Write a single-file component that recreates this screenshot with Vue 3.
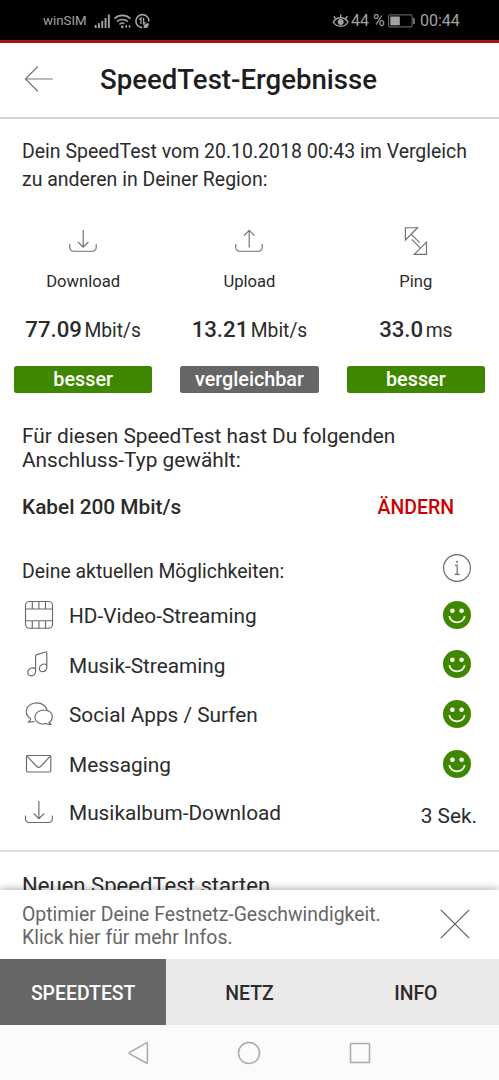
<script setup>
const metrics = [
  { id: 'down', label: 'Download', value: '77.09', unit: 'Mbit/s', rating: 'besser', good: true },
  { id: 'up', label: 'Upload', value: '13.21', unit: 'Mbit/s', rating: 'vergleichbar', good: false },
  { id: 'ping', label: 'Ping', value: '33.0', unit: 'ms', rating: 'besser', good: true },
]
const features = [
  { id: 'video', label: 'HD-Video-Streaming' },
  { id: 'music', label: 'Musik-Streaming' },
  { id: 'social', label: 'Social Apps / Surfen' },
  { id: 'mail', label: 'Messaging' },
  { id: 'album', label: 'Musikalbum-Download', value: '3 Sek.' },
]
const tabs = ['SPEEDTEST', 'NETZ', 'INFO']
</script>

<template>
  <div class="screen">
    <div class="status">
      <span class="carrier">winSIM</span>
      <svg class="sig" width="56" height="18" viewBox="0 0 56 18">
        <g fill="#a2a2a2">
          <rect x="0.7" y="13" width="1.9" height="3" />
          <rect x="4" y="11.2" width="1.9" height="4.8" />
          <rect x="7.3" y="8.8" width="1.9" height="7.2" />
          <rect x="10.6" y="6" width="1.9" height="10" />
          <rect x="13.9" y="2.5" width="1.9" height="13.5" />
        </g>
        <g fill="none" stroke="#a2a2a2" stroke-width="1.6">
          <path d="M20.4 6.6a11.5 11.5 0 0 1 16 0" />
          <path d="M23 9.6a7.8 7.8 0 0 1 10.8 0" />
          <path d="M25.4 12.3a4.6 4.6 0 0 1 5-.9" />
          <path d="M54.9 9.5A6.5 6.5 0 1 0 48.2 15.6" />
          <path d="M47 12V6l-1.8 1.6M49.6 5.8v6l1.8-1.6" stroke-width="1.3" />
        </g>
        <circle cx="28.2" cy="14.9" r="1.3" fill="#a2a2a2" />
        <path d="M31 14.5l2-2v4zM36.8 14.5l-2-2v4z" fill="#a2a2a2" />
        <path d="M49.6 16c-.4-3 1.3-5 5.3-4.6c0 3.6-2 5.2-5.3 4.6z" fill="#a2a2a2" />
      </svg>
      <svg class="eye" width="18" height="16" viewBox="0 0 18 16" fill="none" stroke="#a2a2a2" stroke-width="1.4">
        <path d="M1.3 9C4.5 3.3 13 3.3 16 9C13 14.7 4.5 14.7 1.3 9z" />
        <path d="M3.6 5.5L1.8 3.3M8.7 4.5V1.4M13.6 5.5l1.8-2.2" />
        <circle cx="8.7" cy="9" r="2.3" fill="#a2a2a2" />
      </svg>
      <span class="pct">44 %</span>
      <svg class="batt" width="28" height="14" viewBox="0 0 28 14">
        <rect x="0.6" y="0.9" width="23.5" height="12" rx="1" fill="none" stroke="#777" stroke-width="1" />
        <rect x="2.3" y="2.5" width="9.5" height="8.8" fill="#a2a2a2" />
        <rect x="25.3" y="4" width="1.3" height="6" fill="#a2a2a2" />
      </svg>
      <span class="clock">00:44</span>
    </div>

    <header class="head">
      <svg width="30" height="28" viewBox="0 0 30 28" fill="none" stroke="#777" stroke-width="1.2">
        <path d="M28.7 14H1.7M13.8 1.5L1.4 14l12.4 12.3" />
      </svg>
      <h1>SpeedTest-Ergebnisse</h1>
    </header>

    <main class="content">
      <p class="intro">Dein SpeedTest vom 20.10.2018 00:43 im Vergleich<br />zu anderen in Deiner Region:</p>

      <section class="metrics">
        <div v-for="m in metrics" :key="m.id" class="metric">
          <svg width="32" height="32" viewBox="0 0 32 32" fill="none" stroke="#707070" stroke-width="1.15">
            <template v-if="m.id !== 'ping'">
              <path d="M2.8 19v3.6a3.6 3.6 0 0 0 3.6 3.6h19.2a3.6 3.6 0 0 0 3.6-3.6V19" />
              <path v-if="m.id === 'down'" d="M16.2 5v17M11 17l5.2 5.2L21.4 17" />
              <path v-else d="M16.2 22.5V5.5M11 10.6l5.2-5.2 5.2 5.2" />
            </template>
            <path v-else d="M5.4 2.7H17.6L5.4 15zM26.5 17.2v12.2H14.2zM11.6 9.7l8 8M19.9 22.6l-8.2-8.2" />
          </svg>
          <div class="label">{{ m.label }}</div>
          <div class="value"><b>{{ m.value }}</b><span>{{ m.unit }}</span></div>
          <div class="badge" :class="{ good: m.good }">{{ m.rating }}</div>
        </div>
      </section>

      <p class="type">Für diesen SpeedTest hast Du folgenden<br />Anschluss-Typ gewählt:</p>
      <div class="plan"><strong>Kabel 200 Mbit/s</strong><span class="change">ÄNDERN</span></div>
      <div class="options">
        <span>Deine aktuellen Möglichkeiten:</span>
        <svg width="30" height="30" viewBox="0 0 30 30" fill="none" stroke="#686868" stroke-width="1.15">
          <circle cx="15" cy="15" r="13.4" />
          <path d="M13 12.3h2.2v9M12.8 21.4h4.7" />
          <circle cx="15" cy="8.7" r=".8" fill="#686868" stroke-width=".5" />
        </svg>
      </div>

      <ul class="features">
        <li v-for="f in features" :key="f.id" :class="f.id">
          <svg width="32" height="32" viewBox="0 0 32 32" fill="none" stroke="#6a6a6a" stroke-width="1.15">
            <template v-if="f.id === 'video'">
              <rect x="2.5" y="2.5" width="27" height="26.7" rx="4" />
              <path d="M2.5 10h27M2.5 21.7h27M9.3 2.5V10M15.9 2.5V10M22.5 2.5V10M9.3 21.7v7.5M15.9 21.7v7.5M22.5 21.7v7.5" />
            </template>
            <path v-else-if="f.id === 'music'" d="M12.6 24V8.2Q12.6 7 13.8 6.6L22.6 4Q23.8 3.7 23.8 5V20M12.6 20.8C9.8 18.6 5 20.6 4.8 24.2C4.7 26.4 6 27.8 8.1 27.8C11 27.8 12.6 26 12.6 23M23.8 17C21 14.8 16.6 16.6 16.3 20.2C16.2 22.6 17.7 23.7 19.5 23.7C22.3 23.7 23.8 22 23.8 19" />
            <template v-else-if="f.id === 'social'">
              <path d="M11.6 23.3Q9 24.3 5.6 24Q8.2 22.3 7.4 20.3C1.6 17.3 2.2 9.3 8 6.3C14.5 3 22.5 5.8 24.2 12.3" />
              <path d="M26 24.5C30.5 21.5 30.3 15.2 25.5 13C19.7 10.4 12 13.5 12 19C12 24.6 18.5 27.2 23.3 25.4Q25.5 26.8 28.4 26.2Q26.4 25.6 26 24.5z" />
            </template>
            <template v-else-if="f.id === 'mail'">
              <rect x="3.5" y="7.5" width="24.3" height="16.5" rx="1.2" />
              <path d="M4 8.2l9.8 10.3q1.9 1.8 3.800 0L27.3 8.2" />
            </template>
            <path v-else d="M2.5 19.500v3.4a3.6 3.6 0 0 0 3.6 3.6h19.6a3.6 3.6 0 0 0 3.6-3.6V19.500M15.9 5V22.7M10.6 17.4l5.3 5.3 5.3-5.3" />
          </svg>
          <span class="name">{{ f.label }}</span>
          <span v-if="f.value" class="secs">{{ f.value }}</span>
          <svg v-else width="28" height="28" viewBox="0 0 28 28">
            <circle cx="14" cy="14" r="14" fill="#408700" />
            <circle cx="9.4" cy="9.8" r="2.3" fill="#fff" />
            <circle cx="18.6" cy="9.8" r="2.3" fill="#fff" />
            <path d="M6.3 15.2c1.4 8.2 14 8.2 15.4 0" fill="none" stroke="#fff" stroke-width="1.8" />
          </svg>
        </li>
      </ul>
      <div class="restart">Neuen SpeedTest starten</div>
    </main>

    <aside class="promo">
      <p>Optimier Deine Festnetz-Geschwindigkeit.<br />Klick hier für mehr Infos.</p>
      <svg width="30" height="30" viewBox="0 0 30 30" stroke="#5c5c5c" stroke-width="1.2">
        <path d="M.8 .8l28.4 28.4M29.2 .8L.8 29.2" />
      </svg>
    </aside>
    <nav class="tabs">
      <div v-for="(t, i) in tabs" :key="t" :class="{ active: i === 0 }">{{ t }}</div>
    </nav>
    <div class="sysnav">
      <svg width="24" height="24" viewBox="0 0 24 24"><path d="M21.400 2.2v19.4q0 1.1-1 .4L3.700 12.8q-1.2-.8 0-1.5L20.400 1.8q1-.6 1 .4z" /></svg>
      <svg width="24" height="24" viewBox="0 0 24 24"><circle cx="12" cy="12" r="10.5" /></svg>
      <svg width="24" height="24" viewBox="0 0 24 24"><rect x="2.5" y="2.5" width="19" height="19" rx=".6" /></svg>
    </div>
  </div>
</template>

<style>
body { margin: 0; background: #fff; }
</style>

<style scoped>
* { box-sizing: border-box; }
.screen { width: 499px; height: 1080px; overflow: hidden; display: flex; flex-direction: column; background: #fff; color: #2b2b2b; font: 19.48px Roboto, sans-serif; }
svg { display: block; flex: none; }
p, h1, ul { margin: 0; padding: 0; }
.status { height: 43px; flex: none; background: #000; border-bottom: 3px solid #a8150f; display: flex; align-items: center; color: #a2a2a2; padding: 1px 0 0 43px; }
.carrier { font-size: 13.3px; width: 51px; }
.eye { margin-left: 182px; }
.pct, .clock { font-size: 16px; white-space: nowrap; }
.pct { width: 36px; margin-left: 1px; }
.batt { margin-left: 1px; }
.clock { margin-left: 4px; }
.head { height: 76px; flex: none; border-bottom: 2px solid #d6d6d6; display: flex; align-items: center; padding-left: 24px; padding-bottom: 2px; }
.head h1 { margin-left: 46px; font-size: 27.6px; font-weight: 500; line-height: 34px; color: #1e1e1e; padding-top: 2px; white-space: nowrap; }
.content { height: 770.5px; flex: none; overflow: hidden; padding-top: 19px; }
.intro { padding-left: 22px; line-height: 27.5px; height: 54.5px; white-space: nowrap; }
.metrics { display: grid; grid-template-columns: repeat(3, 1fr); }
.metric { display: flex; flex-direction: column; align-items: center; padding: 32.5px 14px 0; }
.label { margin-top: 14.5px; font-size: 16.6px; line-height: 20px; }
.value { margin-top: 24.9px; line-height: 26px; height: 26px; display: flex; align-items: baseline; gap: 2.5px; white-space: nowrap; }
.value b { font-size: 22.2px; font-weight: 500; }
.value span { font-size: 19.3px; }
.badge { margin-top: 23.3px; align-self: stretch; height: 27.5px; line-height: 28px; border-radius: 2.5px; background: #666; color: #fff; text-align: center; font-weight: 500; font-size: 19.8px; }
.badge.good { background: #408700; }
.type { margin-top: 30.5px; padding-left: 22px; line-height: 24.5px; font-size: 20.85px; white-space: nowrap; }
.plan { margin-top: 21px; height: 28px; line-height: 28px; padding: 0 45px 0 22px; display: flex; justify-content: space-between; }
.plan strong, .change { font-weight: 500; }
.plan strong { font-size: 20.8px; line-height: 27px; }
.change { color: #cc0000; }
.options { margin-top: 31px; height: 30px; padding: 0 27px 0 22px; display: flex; justify-content: space-between; }
.options span { line-height: 28px; margin-top: 5px; font-size: 19.4px; }
.features { list-style: none; margin-top: 7px; }
.features li { height: 49.8px; display: flex; align-items: center; padding: 0 28px 0 23px; }
.name { margin-left: 14px; padding-top: 2.6px; flex: 1; font-size: 20.8px; white-space: nowrap; }
.features li.album { height: 63px; padding-bottom: 15.5px; padding-right: 22px; border-bottom: 2px solid #dedede; }
.secs { padding-top: 8px; font-size: 20.8px; }
.restart { padding-left: 22px; margin-top: 19px; line-height: 28px; font-size: 22.1px; white-space: nowrap; }
.promo { position: relative; height: 69.5px; flex: none; background: #fff; box-shadow: 0 -1px 8px rgba(0, 0, 0, .32); display: flex; justify-content: space-between; align-items: center; padding: 0 29.5px 0 22px; color: #666; }
.promo p { line-height: 22.6px; padding-top: 5px; font-size: 19.4px; white-space: nowrap; }
.tabs { position: relative; height: 66px; flex: none; display: grid; grid-template-columns: repeat(3, 1fr); background: #eaeaea; }
.tabs div { height: 66px; padding-top: 2px; line-height: 65px; text-align: center; font-weight: 500; font-size: 19.4px; }
.tabs .active { background: #666; color: #fff; }
.sysnav { flex: 1; background: #fbfbfb; display: flex; justify-content: center; align-items: center; gap: 87px; padding-right: 1px; }
.sysnav svg { fill: none; stroke: #aaa; stroke-width: 1.5; }
</style>
